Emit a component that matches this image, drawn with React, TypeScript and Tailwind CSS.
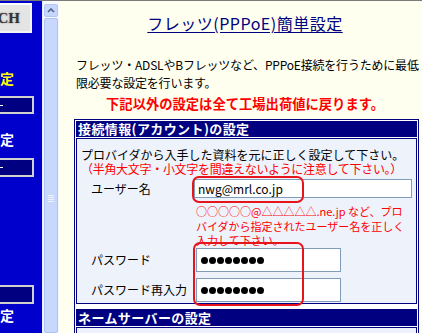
export default function App() {
  const dots = Array.from({ length: 8 });
  const Dots = () => (
    <div className="flex items-center gap-[1px] pl-[4px]">
      {dots.map((_, i) => (
        <span key={i} className="block w-[7px] h-[7px] rounded-full bg-black" />
      ))}
    </div>
  );
  return (
    <div className="w-[422px] h-[333px] overflow-hidden border-t border-[#7a7a7a] flex bg-[#fffff0] font-['Noto_Sans_CJK_JP',sans-serif] text-black">
      {/* sidebar */}
      <div className="w-[42px] h-full shrink-0 bg-[#0000cc] flex flex-col">
        <div className="mt-[2px] w-[32px] h-[30px] bg-[#e4e4e4] border-t-2 border-r-2 border-b-2 border-t-white border-r-[#f4f4f4] border-b-[#f4f4f4] flex items-center justify-end pr-[10px]">
          <span className="font-['Liberation_Serif',serif] font-bold text-[15px] leading-none text-[#333] [text-shadow:0_0_2px_#888]">CH</span>
        </div>
        <div className="mt-[38px] h-[14px] leading-[14px] text-[14px] font-bold text-[#ffff00]">定</div>
        <div className="mt-[11px] w-[34px] h-[18px] bg-[#000080] border-2 border-l-0 border-[#d0d0d0] flex items-center">
          <span className="block w-[3px] h-[1px] bg-white" />
        </div>
        <div className="mt-[18px] h-[14px] leading-[14px] text-[14px] font-bold text-white">定</div>
        <div className="mt-[12px] w-[34px] h-[19px] bg-[#000080] border-2 border-l-0 border-[#d0d0d0] flex items-center">
          <span className="block w-[3px] h-[1px] bg-white" />
        </div>
        <div className="mt-[108px] w-[34px] h-[19px] bg-[#000080] border-2 border-l-0 border-[#d0d0d0]" />
        <div className="mt-[4px] h-[14px] leading-[14px] text-[14px] font-bold text-white">定</div>
      </div>

      {/* scrollbar */}
      <div className="w-[17px] h-full shrink-0 bg-[#f6f8fe] border-l border-[#e8eefc] flex flex-col items-center">
        <div className="mt-[3px] w-[14px] h-[13px] rounded-[2px] bg-[#c6d6fc] border border-[#b4c8f6] flex items-center justify-center">
          <svg width="8" height="5" viewBox="0 0 8 5">
            <path d="M1 4 L4 1 L7 4" fill="none" stroke="#4d6185" strokeWidth="1.6" />
          </svg>
        </div>
        <div className="mt-[1px] w-[14px] flex-1 rounded-[2px] bg-[#c8d7fc] border border-[#aec3f4] flex flex-col items-center">
          <div className="mt-[176px] flex flex-col gap-[1px]">
            {[0, 1, 2, 3].map((i) => (
              <span key={i} className="block w-[6px] h-[1px] bg-[#eef3ff]" />
            ))}
          </div>
        </div>
      </div>

      {/* content */}
      <div className="relative w-[372px] shrink-0 h-full">
        <div className="mt-[12px] h-[20px] leading-[20px] text-center text-[16px] tracking-[0.5px] text-[#000080] underline underline-offset-[2px]">
          フレッツ(PPPoE)簡単設定
        </div>
        <p className="mt-[23px] pl-[17px] text-[12px] leading-[18px] whitespace-nowrap tracking-[-0.2px]">
          フレッツ・ADSLやBフレッツなど、PPPoE接続を行うために最低
          <br />
          限必要な設定を行います。
        </p>
        <div className="mt-[3px] h-[18px] leading-[18px] text-center text-[13.3px] font-bold text-[#ff0000]">
          下記以外の設定は全て工場出荷値に戻ります。
        </div>

        <div className="mt-[6px] ml-[15px] w-[345px] border border-[#000080] bg-white p-[1px] flex flex-col">
          <div className="h-[16px] bg-[#000080] px-[2px] text-[13px] leading-[16px] tracking-[0.4px] font-bold text-white">
            接続情報(アカウント)の設定
          </div>
          <div className="mt-[1px] border border-[#000080] bg-[#edf2fb] pl-[4px] pt-[9px] pb-[1px] flex flex-col">
            <div className="text-[12px] leading-[14px] whitespace-nowrap">プロバイダから入手した資料を元に正しく設定して下さい。</div>
            <div className="text-[12px] leading-[14px] whitespace-nowrap tracking-[-0.3px] text-[#ff0000]">（半角大文字・小文字を間違えないように注意して下さい。）</div>
            <div className="mt-[3px] flex items-center">
              <div className="w-[113px] pl-[10px] text-[12px] leading-[14px]">ユーザー名</div>
              <div className="w-[218px] h-[19px] bg-white border border-[#7f9db9] flex items-center pl-[3px] text-[12px] leading-none">
                nwg@mrl.co.jp
              </div>
            </div>
            <div className="mt-[6px] ml-[115px] h-[44px] text-[11px] leading-[14.5px] text-[#ff0000] whitespace-nowrap">
              ○○○○○@△△△△△.ne.jp など、プロ
              <br />
              バイダから指定されたユーザー名を正しく
              <br />
              入力して下さい。
            </div>
            <div className="flex items-center">
              <div className="w-[115px] pl-[10px] text-[12px] leading-[14px]">パスワード</div>
              <div className="w-[145px] h-[24px] bg-white border border-[#7f9db9] flex items-center">
                <Dots />
              </div>
            </div>
            <div className="mt-[6px] flex items-center">
              <div className="w-[115px] pl-[10px] text-[12px] leading-[14px] whitespace-nowrap">パスワード再入力</div>
              <div className="w-[145px] h-[24px] bg-white border border-[#7f9db9] flex items-center">
                <Dots />
              </div>
            </div>
          </div>
          <div className="mt-[5px] h-[17px] bg-[#000080] px-[2px] text-[13px] leading-[17px] tracking-[0.4px] font-bold text-white">
            ネームサーバーの設定
          </div>
          <div className="mt-[1px] h-[40px] border border-[#000080] bg-[#edf2fb]" />
        </div>

        {/* red highlight marks */}
        <div className="absolute left-[133px] top-[175px] w-[112px] h-[27px] rounded-[7px] border-2 border-[#e8141c]" />
        <div className="absolute left-[134px] top-[241px] w-[111px] h-[64px] rounded-[7px] border-2 border-[#e8141c]" />
      </div>
    </div>
  );
}
